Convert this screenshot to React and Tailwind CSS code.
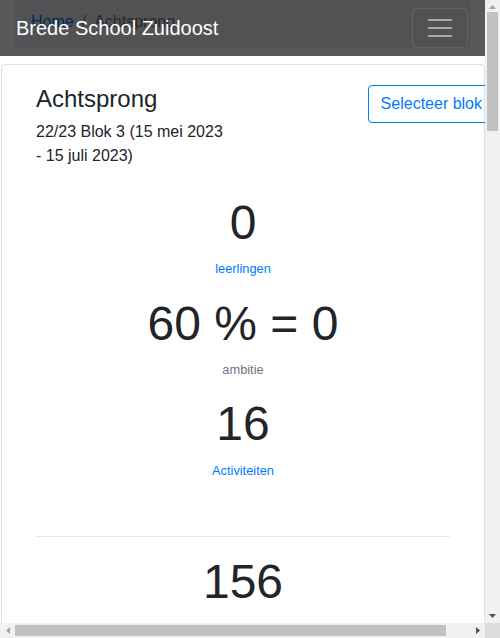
function Arrow({ dir, color }) {
  const points = {
    up: '0,4 3.5,0 7,4',
    down: '0,0 7,0 3.5,4',
    left: '4,0 4,7 0,3.5',
    right: '0,0 0,7 4,3.5',
  }[dir]
  const vertical = dir === 'up' || dir === 'down'
  return (
    <svg width={vertical ? 7 : 4} height={vertical ? 4 : 7} viewBox={vertical ? '0 0 7 4' : '0 0 4 7'}>
      <polygon points={points} fill={color} />
    </svg>
  )
}

export default function App() {
  const stats = [
    { value: '0', label: 'leerlingen', link: true },
    { value: '60 % = 0', label: 'ambitie', link: false },
    { value: '16', label: 'Activiteiten', link: true },
  ]

  return (
    <div className="w-[500px] h-[638px] grid grid-cols-[485px_15px] grid-rows-[623px_15px] overflow-hidden bg-white text-[#212529] font-['Liberation_Sans',Arial,sans-serif]">

      {/* Viewport */}
      <div className="relative overflow-hidden">

        {/* Navbar, lies over the breadcrumb */}
        <nav className="absolute top-0 left-0 right-0 z-10 h-14 bg-[rgba(0,0,0,0.65)] flex items-center justify-between pl-4 pr-[17px]">
          <span className="text-white text-[20px] leading-[30px]">Brede School Zuidoost</span>
          <button className="w-[56px] h-[40px] rounded-[4px] border border-[rgba(255,255,255,0.1)] flex flex-col items-center justify-center gap-[6px]">
            <span className="block w-6 h-[2px] bg-[rgba(255,255,255,0.5)]" />
            <span className="block w-6 h-[2px] bg-[rgba(255,255,255,0.5)]" />
            <span className="block w-6 h-[2px] bg-[rgba(255,255,255,0.5)]" />
          </button>
        </nav>

        {/* Breadcrumb */}
        <div className="px-[15px]">
          <div className="bg-[#e9ecef] rounded-[4px] px-4 pt-[10px] pb-[14px] text-[16px] leading-6">
            <a className="text-[#007bff]">Home</a>
            <span className="text-[#6c757d] px-2">/</span>
            <span className="text-[#6c757d]">Achtsprong</span>
          </div>
        </div>

        {/* Card */}
        <div className="ml-[1px] mt-[16px] w-[484px] min-h-[3000px] border border-[#dfdfdf] rounded-[4px] px-[34px] pt-5">
          <div className="w-[476px] flex items-start justify-between">
            <div className="w-[192px]">
              <h4 className="text-[24px] leading-[1.2] font-normal mb-[6px]">Achtsprong</h4>
              <p className="text-[16px] leading-6">22/23 Blok 3 (15 mei 2023 - 15 juli 2023)</p>
            </div>
            <button className="mr-[17px] border border-[#007bff] text-[#007bff] rounded-[4px] px-3 py-[6px] text-[16px] leading-6 whitespace-nowrap">
              Selecteer blok
            </button>
          </div>

          <div className="mt-[26px] text-center">
            {stats.map(s => (
              <div key={s.label} className="mb-4">
                <div className="text-[48px] leading-[1.2] mb-2">{s.value}</div>
                <div className={`text-[12.8px] leading-[1.5] ${s.link ? 'text-[#007bff]' : 'text-[#6c757d]'}`}>{s.label}</div>
              </div>
            ))}
          </div>

          <hr className="mt-[56px] border-0 border-t border-[#e5e5e5]" />

          <div className="mt-4 text-center">
            <div className="text-[48px] leading-[1.2] mb-2">156</div>
          </div>
        </div>
      </div>

      {/* Vertical scrollbar */}
      <div className="bg-[#f1f1f1] flex flex-col">
        <div className="h-[12px] flex items-center justify-center pt-[1px]">
          <Arrow dir="up" color="#a3a3a3" />
        </div>
        <div className="ml-[2px] w-[11px] h-[119px] bg-[#c1c1c1]" />
        <div className="flex-1" />
        <div className="h-[15px] flex items-center justify-center">
          <Arrow dir="down" color="#505050" />
        </div>
      </div>

      {/* Horizontal scrollbar */}
      <div className="bg-[#f1f1f1] flex items-center">
        <div className="w-[15px] h-full flex items-center justify-center">
          <Arrow dir="left" color="#a3a3a3" />
        </div>
        <div className="w-[431px] h-[11px] bg-[#c1c1c1]" />
        <div className="flex-1" />
        <div className="w-[15px] h-full flex items-center justify-center">
          <Arrow dir="right" color="#505050" />
        </div>
      </div>

      {/* Scrollbar corner */}
      <div className="bg-[#dcdcdc]" />
    </div>
  )
}
